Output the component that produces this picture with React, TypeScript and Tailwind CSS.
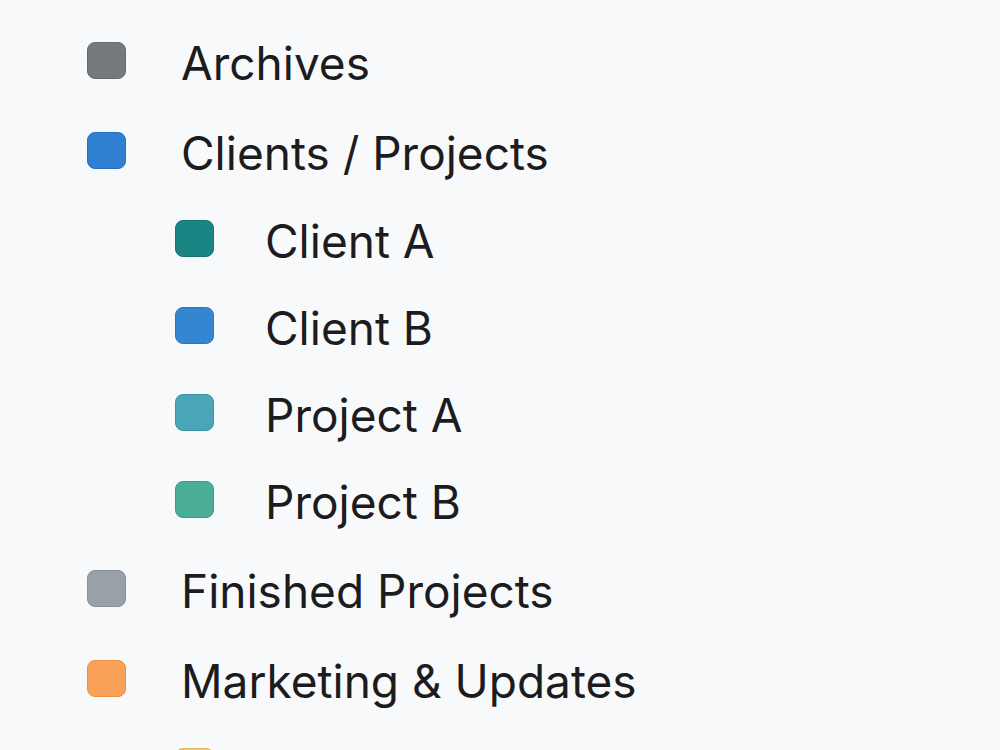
import React from 'react';

interface Folder {
  name: string;
  color: string;
  border: string;
  sub?: boolean;
}

const folders: Folder[] = [
  { name: 'Archives', color: 'bg-[#75787d]', border: 'border-[#66696e]' },
  { name: 'Clients / Projects', color: 'bg-[#2f80d2]', border: 'border-[#2670bd]' },
  { name: 'Client A', color: 'bg-[#1a8582]', border: 'border-[#157572]', sub: true },
  { name: 'Client B', color: 'bg-[#3586d0]', border: 'border-[#2b76bd]', sub: true },
  { name: 'Project A', color: 'bg-[#4aa6b6]', border: 'border-[#3c94a3]', sub: true },
  { name: 'Project B', color: 'bg-[#4aae96]', border: 'border-[#3d9c84]', sub: true },
  { name: 'Finished Projects', color: 'bg-[#99a0a7]', border: 'border-[#888f96]' },
  { name: 'Marketing & Updates', color: 'bg-[#f9a157]', border: 'border-[#ee8f43]' },
  { name: 'Personal', color: 'bg-[#f5c46a]', border: 'border-[#e8b458]', sub: true },
];

const App: React.FC = () => {
  return (
    <div
      className="w-[1000px] h-[750px] overflow-hidden bg-[#f8f9fb] pt-[15px]"
      style={{ fontFamily: 'Inter, "Noto Sans", sans-serif' }}
    >
      <ul className="flex flex-col">
        {folders.map((f) => (
          <li
            key={f.name}
            className={`flex items-center shrink-0 ${f.sub ? 'h-[87px] pl-[175px]' : 'h-[90px] pl-[87px]'}`}
          >
            <span className={`w-[39px] h-[37px] shrink-0 rounded-[8px] border ${f.color} ${f.border}`} />
            <span
              className={`${f.sub ? 'ml-[51px]' : 'ml-[55px]'} mt-[5px] text-[46px] leading-none text-[#1c1c1e] whitespace-nowrap`}
            >
              {f.name}
            </span>
          </li>
        ))}
      </ul>
    </div>
  );
};

export default App;
